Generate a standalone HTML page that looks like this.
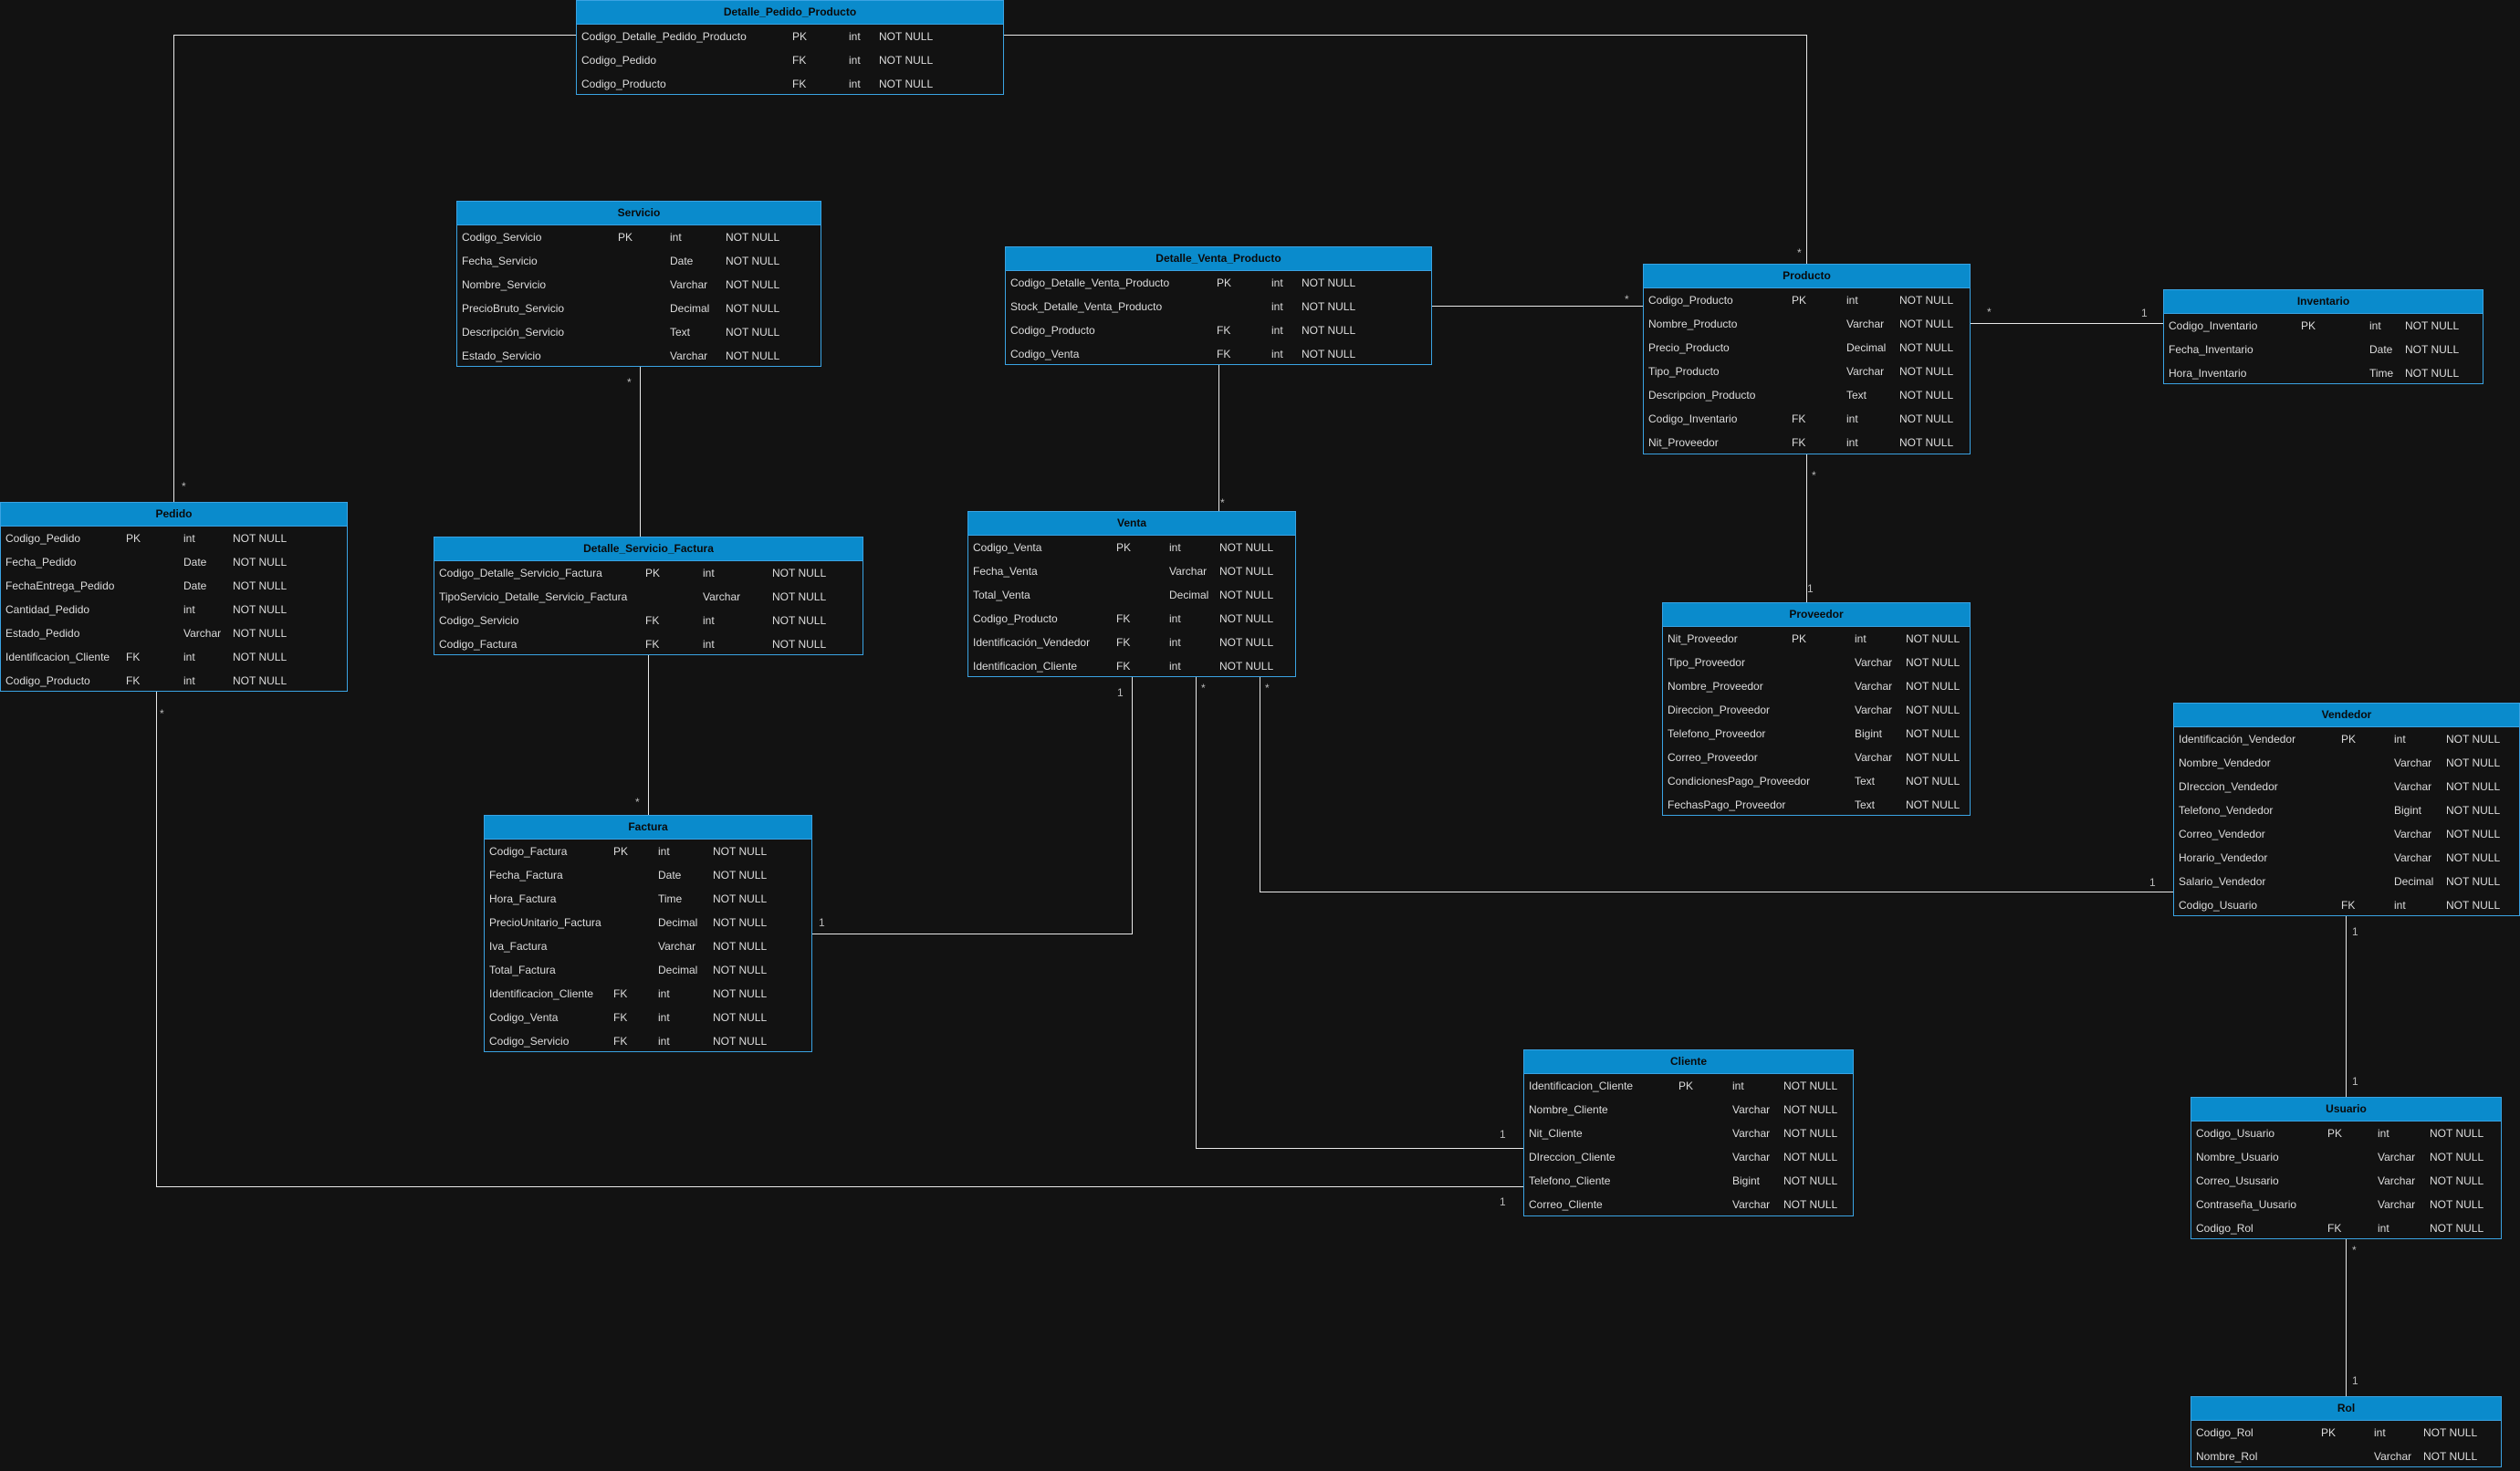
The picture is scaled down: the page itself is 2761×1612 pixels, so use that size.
<!DOCTYPE html>
<html><head><meta charset="utf-8"><style>
body{margin:0;width:2761px;height:1612px;background:#121212;position:relative;overflow:hidden;font-family:"Liberation Sans",Arial,sans-serif;}
.t{position:absolute;background:#121212;border:1px solid #3aa3e3;box-sizing:border-box;font-size:12px;color:#dcdcdc}
.h{height:25px;background:#0a8bcc;border-bottom:1px solid #3aa3e3;text-align:center;font-weight:bold;line-height:25px;color:#0a0a0a}
.r{height:26px;position:relative;line-height:26px}
.r span{position:absolute;white-space:nowrap}
.r span:first-child{left:5px}
.k{left:var(--k)}.y{left:var(--y)}.n{left:var(--n)}
.l{position:absolute;background:#e8e8e8}
.c{position:absolute;color:#bbb;font-size:12px}
</style></head><body>

<div class="l" style="left:190px;top:38px;width:441px;height:1px"></div>
<div class="l" style="left:190px;top:38px;width:1px;height:512px"></div>
<div class="l" style="left:1100px;top:38px;width:879px;height:1px"></div>
<div class="l" style="left:1979px;top:38px;width:1px;height:251px"></div>
<div class="l" style="left:701px;top:402px;width:1px;height:186px"></div>
<div class="l" style="left:710px;top:718px;width:1px;height:175px"></div>
<div class="l" style="left:1569px;top:335px;width:231px;height:1px"></div>
<div class="l" style="left:1335px;top:400px;width:1px;height:160px"></div>
<div class="l" style="left:2159px;top:354px;width:211px;height:1px"></div>
<div class="l" style="left:1979px;top:498px;width:1px;height:162px"></div>
<div class="l" style="left:1240px;top:742px;width:1px;height:282px"></div>
<div class="l" style="left:890px;top:1023px;width:351px;height:1px"></div>
<div class="l" style="left:1310px;top:742px;width:1px;height:516px"></div>
<div class="l" style="left:1310px;top:1258px;width:359px;height:1px"></div>
<div class="l" style="left:1380px;top:742px;width:1px;height:235px"></div>
<div class="l" style="left:1380px;top:977px;width:1001px;height:1px"></div>
<div class="l" style="left:171px;top:758px;width:1px;height:542px"></div>
<div class="l" style="left:171px;top:1300px;width:1498px;height:1px"></div>
<div class="l" style="left:2570px;top:1004px;width:1px;height:198px"></div>
<div class="l" style="left:2570px;top:1358px;width:1px;height:172px"></div>

<div class="c" style="left:199px;top:526px">*</div>
<div class="c" style="left:1969px;top:270px">*</div>
<div class="c" style="left:687px;top:412px">*</div>
<div class="c" style="left:696px;top:872px">*</div>
<div class="c" style="left:1780px;top:321px">*</div>
<div class="c" style="left:1337px;top:544px">*</div>
<div class="c" style="left:2177px;top:335px">*</div>
<div class="c" style="left:2346px;top:336px">1</div>
<div class="c" style="left:1985px;top:514px">*</div>
<div class="c" style="left:1980px;top:638px">1</div>
<div class="c" style="left:1224px;top:752px">1</div>
<div class="c" style="left:897px;top:1004px">1</div>
<div class="c" style="left:1316px;top:747px">*</div>
<div class="c" style="left:1643px;top:1236px">1</div>
<div class="c" style="left:1386px;top:747px">*</div>
<div class="c" style="left:2355px;top:960px">1</div>
<div class="c" style="left:175px;top:775px">*</div>
<div class="c" style="left:1643px;top:1310px">1</div>
<div class="c" style="left:2577px;top:1014px">1</div>
<div class="c" style="left:2577px;top:1178px">1</div>
<div class="c" style="left:2577px;top:1363px">*</div>
<div class="c" style="left:2577px;top:1506px">1</div>

<div class="t" style="left:631px;top:0;width:469px;height:104px;--k:236px;--y:298px;--n:331px">
<div class="h">Detalle_Pedido_Producto</div>
<div class="r"><span>Codigo_Detalle_Pedido_Producto</span><span class="k">PK</span><span class="y">int</span><span class="n">NOT NULL</span></div>
<div class="r"><span>Codigo_Pedido</span><span class="k">FK</span><span class="y">int</span><span class="n">NOT NULL</span></div>
<div class="r"><span>Codigo_Producto</span><span class="k">FK</span><span class="y">int</span><span class="n">NOT NULL</span></div>
</div>

<div class="t" style="left:500px;top:220px;width:400px;height:182px;--k:176px;--y:233px;--n:294px">
<div class="h">Servicio</div>
<div class="r"><span>Codigo_Servicio</span><span class="k">PK</span><span class="y">int</span><span class="n">NOT NULL</span></div>
<div class="r"><span>Fecha_Servicio</span><span class="y">Date</span><span class="n">NOT NULL</span></div>
<div class="r"><span>Nombre_Servicio</span><span class="y">Varchar</span><span class="n">NOT NULL</span></div>
<div class="r"><span>PrecioBruto_Servicio</span><span class="y">Decimal</span><span class="n">NOT NULL</span></div>
<div class="r"><span>Descripción_Servicio</span><span class="y">Text</span><span class="n">NOT NULL</span></div>
<div class="r"><span>Estado_Servicio</span><span class="y">Varchar</span><span class="n">NOT NULL</span></div>
</div>

<div class="t" style="left:1101px;top:270px;width:468px;height:130px;--k:231px;--y:291px;--n:324px">
<div class="h">Detalle_Venta_Producto</div>
<div class="r"><span>Codigo_Detalle_Venta_Producto</span><span class="k">PK</span><span class="y">int</span><span class="n">NOT NULL</span></div>
<div class="r"><span>Stock_Detalle_Venta_Producto</span><span class="y">int</span><span class="n">NOT NULL</span></div>
<div class="r"><span>Codigo_Producto</span><span class="k">FK</span><span class="y">int</span><span class="n">NOT NULL</span></div>
<div class="r"><span>Codigo_Venta</span><span class="k">FK</span><span class="y">int</span><span class="n">NOT NULL</span></div>
</div>

<div class="t" style="left:1800px;top:289px;width:359px;height:209px;--k:162px;--y:222px;--n:280px">
<div class="h">Producto</div>
<div class="r"><span>Codigo_Producto</span><span class="k">PK</span><span class="y">int</span><span class="n">NOT NULL</span></div>
<div class="r"><span>Nombre_Producto</span><span class="y">Varchar</span><span class="n">NOT NULL</span></div>
<div class="r"><span>Precio_Producto</span><span class="y">Decimal</span><span class="n">NOT NULL</span></div>
<div class="r"><span>Tipo_Producto</span><span class="y">Varchar</span><span class="n">NOT NULL</span></div>
<div class="r"><span>Descripcion_Producto</span><span class="y">Text</span><span class="n">NOT NULL</span></div>
<div class="r"><span>Codigo_Inventario</span><span class="k">FK</span><span class="y">int</span><span class="n">NOT NULL</span></div>
<div class="r"><span>Nit_Proveedor</span><span class="k">FK</span><span class="y">int</span><span class="n">NOT NULL</span></div>
</div>

<div class="t" style="left:2370px;top:317px;width:351px;height:104px;--k:150px;--y:225px;--n:264px">
<div class="h">Inventario</div>
<div class="r"><span>Codigo_Inventario</span><span class="k">PK</span><span class="y">int</span><span class="n">NOT NULL</span></div>
<div class="r"><span>Fecha_Inventario</span><span class="y">Date</span><span class="n">NOT NULL</span></div>
<div class="r"><span>Hora_Inventario</span><span class="y">Time</span><span class="n">NOT NULL</span></div>
</div>

<div class="t" style="left:0;top:550px;width:381px;height:208px;--k:137px;--y:200px;--n:254px">
<div class="h">Pedido</div>
<div class="r"><span>Codigo_Pedido</span><span class="k">PK</span><span class="y">int</span><span class="n">NOT NULL</span></div>
<div class="r"><span>Fecha_Pedido</span><span class="y">Date</span><span class="n">NOT NULL</span></div>
<div class="r"><span>FechaEntrega_Pedido</span><span class="y">Date</span><span class="n">NOT NULL</span></div>
<div class="r"><span>Cantidad_Pedido</span><span class="y">int</span><span class="n">NOT NULL</span></div>
<div class="r"><span>Estado_Pedido</span><span class="y">Varchar</span><span class="n">NOT NULL</span></div>
<div class="r"><span>Identificacion_Cliente</span><span class="k">FK</span><span class="y">int</span><span class="n">NOT NULL</span></div>
<div class="r"><span>Codigo_Producto</span><span class="k">FK</span><span class="y">int</span><span class="n">NOT NULL</span></div>
</div>

<div class="t" style="left:475px;top:588px;width:471px;height:130px;--k:231px;--y:294px;--n:370px">
<div class="h">Detalle_Servicio_Factura</div>
<div class="r"><span>Codigo_Detalle_Servicio_Factura</span><span class="k">PK</span><span class="y">int</span><span class="n">NOT NULL</span></div>
<div class="r"><span>TipoServicio_Detalle_Servicio_Factura</span><span class="y">Varchar</span><span class="n">NOT NULL</span></div>
<div class="r"><span>Codigo_Servicio</span><span class="k">FK</span><span class="y">int</span><span class="n">NOT NULL</span></div>
<div class="r"><span>Codigo_Factura</span><span class="k">FK</span><span class="y">int</span><span class="n">NOT NULL</span></div>
</div>

<div class="t" style="left:1060px;top:560px;width:360px;height:182px;--k:162px;--y:220px;--n:275px">
<div class="h">Venta</div>
<div class="r"><span>Codigo_Venta</span><span class="k">PK</span><span class="y">int</span><span class="n">NOT NULL</span></div>
<div class="r"><span>Fecha_Venta</span><span class="y">Varchar</span><span class="n">NOT NULL</span></div>
<div class="r"><span>Total_Venta</span><span class="y">Decimal</span><span class="n">NOT NULL</span></div>
<div class="r"><span>Codigo_Producto</span><span class="k">FK</span><span class="y">int</span><span class="n">NOT NULL</span></div>
<div class="r"><span>Identificación_Vendedor</span><span class="k">FK</span><span class="y">int</span><span class="n">NOT NULL</span></div>
<div class="r"><span>Identificacion_Cliente</span><span class="k">FK</span><span class="y">int</span><span class="n">NOT NULL</span></div>
</div>

<div class="t" style="left:1821px;top:660px;width:338px;height:234px;--k:141px;--y:210px;--n:266px">
<div class="h">Proveedor</div>
<div class="r"><span>Nit_Proveedor</span><span class="k">PK</span><span class="y">int</span><span class="n">NOT NULL</span></div>
<div class="r"><span>Tipo_Proveedor</span><span class="y">Varchar</span><span class="n">NOT NULL</span></div>
<div class="r"><span>Nombre_Proveedor</span><span class="y">Varchar</span><span class="n">NOT NULL</span></div>
<div class="r"><span>Direccion_Proveedor</span><span class="y">Varchar</span><span class="n">NOT NULL</span></div>
<div class="r"><span>Telefono_Proveedor</span><span class="y">Bigint</span><span class="n">NOT NULL</span></div>
<div class="r"><span>Correo_Proveedor</span><span class="y">Varchar</span><span class="n">NOT NULL</span></div>
<div class="r"><span>CondicionesPago_Proveedor</span><span class="y">Text</span><span class="n">NOT NULL</span></div>
<div class="r"><span>FechasPago_Proveedor</span><span class="y">Text</span><span class="n">NOT NULL</span></div>
</div>

<div class="t" style="left:2381px;top:770px;width:380px;height:234px;--k:183px;--y:241px;--n:298px">
<div class="h">Vendedor</div>
<div class="r"><span>Identificación_Vendedor</span><span class="k">PK</span><span class="y">int</span><span class="n">NOT NULL</span></div>
<div class="r"><span>Nombre_Vendedor</span><span class="y">Varchar</span><span class="n">NOT NULL</span></div>
<div class="r"><span>DIreccion_Vendedor</span><span class="y">Varchar</span><span class="n">NOT NULL</span></div>
<div class="r"><span>Telefono_Vendedor</span><span class="y">Bigint</span><span class="n">NOT NULL</span></div>
<div class="r"><span>Correo_Vendedor</span><span class="y">Varchar</span><span class="n">NOT NULL</span></div>
<div class="r"><span>Horario_Vendedor</span><span class="y">Varchar</span><span class="n">NOT NULL</span></div>
<div class="r"><span>Salario_Vendedor</span><span class="y">Decimal</span><span class="n">NOT NULL</span></div>
<div class="r"><span>Codigo_Usuario</span><span class="k">FK</span><span class="y">int</span><span class="n">NOT NULL</span></div>
</div>

<div class="t" style="left:530px;top:893px;width:360px;height:260px;--k:141px;--y:190px;--n:250px">
<div class="h">Factura</div>
<div class="r"><span>Codigo_Factura</span><span class="k">PK</span><span class="y">int</span><span class="n">NOT NULL</span></div>
<div class="r"><span>Fecha_Factura</span><span class="y">Date</span><span class="n">NOT NULL</span></div>
<div class="r"><span>Hora_Factura</span><span class="y">Time</span><span class="n">NOT NULL</span></div>
<div class="r"><span>PrecioUnitario_Factura</span><span class="y">Decimal</span><span class="n">NOT NULL</span></div>
<div class="r"><span>Iva_Factura</span><span class="y">Varchar</span><span class="n">NOT NULL</span></div>
<div class="r"><span>Total_Factura</span><span class="y">Decimal</span><span class="n">NOT NULL</span></div>
<div class="r"><span>Identificacion_Cliente</span><span class="k">FK</span><span class="y">int</span><span class="n">NOT NULL</span></div>
<div class="r"><span>Codigo_Venta</span><span class="k">FK</span><span class="y">int</span><span class="n">NOT NULL</span></div>
<div class="r"><span>Codigo_Servicio</span><span class="k">FK</span><span class="y">int</span><span class="n">NOT NULL</span></div>
</div>

<div class="t" style="left:1669px;top:1150px;width:362px;height:183px;--k:169px;--y:228px;--n:284px">
<div class="h">Cliente</div>
<div class="r"><span>Identificacion_Cliente</span><span class="k">PK</span><span class="y">int</span><span class="n">NOT NULL</span></div>
<div class="r"><span>Nombre_Cliente</span><span class="y">Varchar</span><span class="n">NOT NULL</span></div>
<div class="r"><span>Nit_Cliente</span><span class="y">Varchar</span><span class="n">NOT NULL</span></div>
<div class="r"><span>DIreccion_Cliente</span><span class="y">Varchar</span><span class="n">NOT NULL</span></div>
<div class="r"><span>Telefono_Cliente</span><span class="y">Bigint</span><span class="n">NOT NULL</span></div>
<div class="r"><span>Correo_Cliente</span><span class="y">Varchar</span><span class="n">NOT NULL</span></div>
</div>

<div class="t" style="left:2400px;top:1202px;width:341px;height:156px;--k:149px;--y:204px;--n:261px">
<div class="h">Usuario</div>
<div class="r"><span>Codigo_Usuario</span><span class="k">PK</span><span class="y">int</span><span class="n">NOT NULL</span></div>
<div class="r"><span>Nombre_Usuario</span><span class="y">Varchar</span><span class="n">NOT NULL</span></div>
<div class="r"><span>Correo_Ususario</span><span class="y">Varchar</span><span class="n">NOT NULL</span></div>
<div class="r"><span>Contraseña_Uusario</span><span class="y">Varchar</span><span class="n">NOT NULL</span></div>
<div class="r"><span>Codigo_Rol</span><span class="k">FK</span><span class="y">int</span><span class="n">NOT NULL</span></div>
</div>

<div class="t" style="left:2400px;top:1530px;width:341px;height:78px;--k:142px;--y:200px;--n:254px">
<div class="h">Rol</div>
<div class="r"><span>Codigo_Rol</span><span class="k">PK</span><span class="y">int</span><span class="n">NOT NULL</span></div>
<div class="r"><span>Nombre_Rol</span><span class="y">Varchar</span><span class="n">NOT NULL</span></div>
</div>

</body></html>
